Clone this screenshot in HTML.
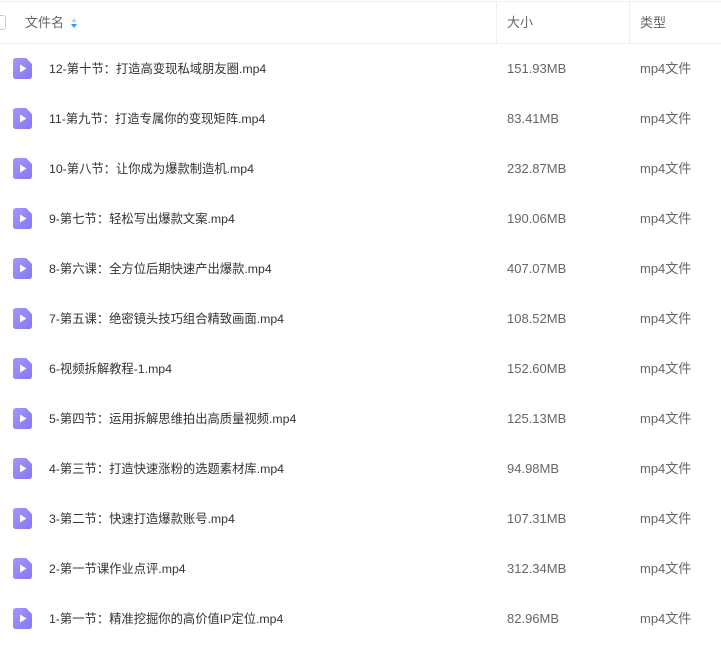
<!DOCTYPE html>
<html><head><meta charset="utf-8"><style>
body{margin:0;width:721px;height:628px;overflow:hidden;background:#fff;font-family:"Liberation Sans","Noto Sans CJK SC",sans-serif;position:relative}
.hdr{position:absolute;left:0;top:1px;width:721px;height:41px;border-top:1px solid #f0f0f0;border-bottom:1px solid #eeeeee;}
.h{position:absolute;top:13px;font-size:13px;line-height:16px;color:#666}
.vd{position:absolute;top:0;width:1px;height:41px;background:#eeeeee}
.cb{position:absolute;left:-9px;top:13px;width:13px;height:13px;border:1px solid #ccc;border-radius:3px}
.row{position:absolute;left:0;width:721px;height:50px}
.ic{position:absolute;left:13px;top:-10px;width:19px;height:21px}
.n{position:absolute;left:49px;top:-7px;font-size:12.3px;line-height:16px;height:16px;color:#333;white-space:nowrap}
.s{position:absolute;left:507px;top:-7px;font-size:13px;line-height:16px;height:16px;color:#666}
.t{position:absolute;left:640px;top:-7px;font-size:13px;line-height:16px;height:16px;color:#666}
</style></head><body>
<div class="hdr">
<div class="cb"></div>
<div class="h" style="left:25px">文件名</div>
<svg style="position:absolute;left:71px;top:16px" width="6" height="10"><path d="M3 0L6 4H0Z" fill="#c8d3e0"/><path d="M3 10L6 6H0Z" fill="#1e9fff"/></svg>
<div class="vd" style="left:496px"></div>
<div class="h" style="left:507px">大小</div>
<div class="vd" style="left:629px"></div>
<div class="h" style="left:640px">类型</div>
</div>
<div id="rows"></div>
<script>
var d=[["12-第十节：打造高变现私域朋友圈.mp4","151.93MB"],["11-第九节：打造专属你的变现矩阵.mp4","83.41MB"],["10-第八节：让你成为爆款制造机.mp4","232.87MB"],["9-第七节：轻松写出爆款文案.mp4","190.06MB"],["8-第六课：全方位后期快速产出爆款.mp4","407.07MB"],["7-第五课：绝密镜头技巧组合精致画面.mp4","108.52MB"],["6-视频拆解教程-1.mp4","152.60MB"],["5-第四节：运用拆解思维拍出高质量视频.mp4","125.13MB"],["4-第三节：打造快速涨粉的选题素材库.mp4","94.98MB"],["3-第二节：快速打造爆款账号.mp4","107.31MB"],["2-第一节课作业点评.mp4","312.34MB"],["1-第一节：精准挖掘你的高价值IP定位.mp4","82.96MB"]];
var h="";
d.forEach(function(r,i){var y=68+i*50;
h+='<div class="row" style="top:'+y+'px"><svg class="ic" viewBox="0 0 19 21"><defs><linearGradient id="g'+i+'" x1="0" y1="0" x2="1" y2="1"><stop offset="0" stop-color="#a397fb"/><stop offset="1" stop-color="#8577f3"/></linearGradient></defs><path d="M3 0H13L19 6V18Q19 21 16 21H3Q0 21 0 18V3Q0 0 3 0Z" fill="url(#g'+i+')"/><path d="M7 6.5L13.5 10.5L7 14.5Z" fill="#fff"/></svg><div class="n">'+r[0]+'</div><div class="s">'+r[1]+'</div><div class="t">mp4文件</div></div>';});
document.getElementById("rows").innerHTML=h;
</script>
</body></html>
